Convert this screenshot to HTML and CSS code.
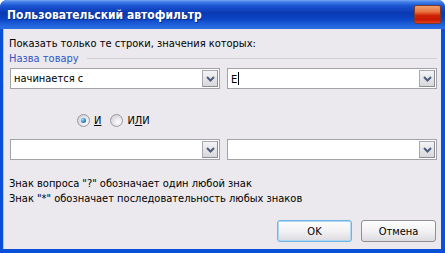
FILE: index.html
```html
<!DOCTYPE html>
<html lang="ru">
  <head>
    <meta charset="UTF-8" />
    <title>Пользовательский автофильтр</title>
    <link rel="stylesheet" href="styles.css">
  </head>
  <body>
    <div class="window">
      <div class="titlebar">
        <span class="title">Пользовательский автофильтр</span>
        <span class="close-btn"></span>
      </div>

      <div class="client">
        <p class="lead">Показать только те строки, значения которых:</p>

        <div class="group">
          <span class="group-name">Назва товару</span>
          <span class="group-line"></span>
        </div>

        <div class="combo-row first">
          <div class="combo">
            <span class="combo-text">начинается с</span>
            <span class="combo-btn">
              <svg width="9" height="6" viewBox="0 0 9 6"><polyline points="1,1 4.5,4.5 8,1" fill="none" stroke="#4d5d7e" stroke-width="2"/></svg>
            </span>
          </div>
          <div class="combo">
            <span class="combo-text">E<span class="caret"></span></span>
            <span class="combo-btn">
              <svg width="9" height="6" viewBox="0 0 9 6"><polyline points="1,1 4.5,4.5 8,1" fill="none" stroke="#4d5d7e" stroke-width="2"/></svg>
            </span>
          </div>
        </div>

        <div class="radios">
          <label class="radio"><span class="dot checked"></span><span><u>И</u></span></label>
          <label class="radio"><span class="dot"></span><span>И<u>Л</u>И</span></label>
        </div>

        <div class="combo-row second">
          <div class="combo">
            <span class="combo-text"></span>
            <span class="combo-btn">
              <svg width="9" height="6" viewBox="0 0 9 6"><polyline points="1,1 4.5,4.5 8,1" fill="none" stroke="#4d5d7e" stroke-width="2"/></svg>
            </span>
          </div>
          <div class="combo">
            <span class="combo-text"></span>
            <span class="combo-btn">
              <svg width="9" height="6" viewBox="0 0 9 6"><polyline points="1,1 4.5,4.5 8,1" fill="none" stroke="#4d5d7e" stroke-width="2"/></svg>
            </span>
          </div>
        </div>

        <div class="notes">
          <p>Знак вопроса "?" обозначает один любой знак</p>
          <p>Знак "*" обозначает последовательность любых знаков</p>
        </div>

        <div class="buttons">
          <button class="default">OK</button>
          <button>Отмена</button>
        </div>
      </div>
    </div>
  </body>
</html>
```

FILE: styles.css
```css
body {
  margin: 0;
  font-family: "DejaVu Sans Condensed", "DejaVu Sans", sans-serif;
  font-size: 11px;
  color: #000;
  background: #ffffff;
}
.window {
  width: 445px;
  height: 253px;
  box-sizing: border-box;
  display: flex;
  flex-direction: column;
  background: #0a4fd8;
  border-radius: 7px 7px 0 0;
  overflow: hidden;
}
.titlebar {
  height: 29px;
  flex: none;
  display: flex;
  align-items: center;
  justify-content: space-between;
  padding: 0 4px 0 7px;
  background: linear-gradient(to bottom, #7aa6f2 0, #3f7ee8 2px, #1a52d0 6px, #0a3ab2 13px, #0c44c4 19px, #2163dc 25px, #2e6fe2 29px);
}
.title {
  color: #fff;
  font-weight: bold;
  font-size: 12px;
  text-shadow: 1px 1px 0 #0a2a80;
  margin-top: 1px;
}
.close-btn {
  width: 27px;
  height: 19px;
  box-sizing: border-box;
  border: 1px solid #7a3a2a;
  border-radius: 2px;
  background: linear-gradient(to bottom, #f0a070 0, #e8703e 35%, #d02408 55%, #c81800 80%, #e04020 100%);
  margin-top: -1px;
}
.client {
  flex: 1;
  margin: 0 4px 4px 3px;
  background: #ebe9ed;
  border-left: 1px solid #a9c8f8;
  padding: 8px 4px 0 5px;
  display: flex;
  flex-direction: column;
}
.lead {
  margin: 0;
  line-height: 13px;
}
.group {
  display: flex;
  align-items: center;
  margin-top: 2px;
  height: 13px;
}
.group-name {
  color: #2f56c2;
}
.group-line {
  flex: 1;
  height: 1px;
  background: #d2d0d6;
  margin-left: 8px;
}
.combo-row {
  display: flex;
  justify-content: space-between;
  padding-left: 1px;
}
.combo-row.first {
  margin-top: 3px;
}
.combo-row.second {
  margin-top: 12px;
}
.combo {
  width: 210px;
  height: 21px;
  box-sizing: border-box;
  border: 1px solid #a3a2a7;
  background: #fff;
  display: flex;
  align-items: center;
  padding: 1px;
}
.combo-text {
  flex: 1;
  padding-left: 2px;
  white-space: nowrap;
}
.caret {
  display: inline-block;
  width: 1px;
  height: 13px;
  background: #000;
  vertical-align: -2px;
  margin-left: 1px;
}
.combo-btn {
  width: 16px;
  height: 17px;
  box-sizing: border-box;
  border: 1px solid #a8a8b0;
  border-right-color: #8c8c94;
  border-bottom-color: #8c8c94;
  background: linear-gradient(to bottom, #f4f4f6, #d8d8dc);
  display: flex;
  align-items: center;
  justify-content: center;
}
.radios {
  display: flex;
  gap: 9px;
  padding-left: 68px;
  margin-top: 25px;
  height: 13px;
  align-items: center;
}
.radio {
  display: flex;
  align-items: center;
  gap: 4px;
}
.radio u {
  text-decoration-thickness: 1px;
}
.dot {
  width: 13px;
  height: 13px;
  box-sizing: border-box;
  border-radius: 50%;
  border: 1px solid #9a9aa0;
  background: radial-gradient(circle at 65% 65%, #ffffff 0, #e8e8ec 40%, #c8c8cc 100%);
  position: relative;
}
.dot.checked::after {
  content: "";
  position: absolute;
  left: 3px;
  top: 3px;
  width: 5px;
  height: 5px;
  border-radius: 50%;
  background: radial-gradient(circle at 35% 35%, #a8e0ff 0, #2a8ad0 50%, #0e4e90 100%);
}
.notes {
  margin-top: 16px;
}
.notes p {
  margin: 0;
  line-height: 15px;
}
.buttons {
  display: flex;
  justify-content: flex-end;
  gap: 9px;
  margin-top: 14px;
  padding-right: 1px;
}
button {
  width: 75px;
  height: 22px;
  font-family: inherit;
  font-size: 11px;
  border: 1px solid #8e8e94;
  border-radius: 3px;
  background: linear-gradient(to bottom, #fdfdfd 0, #f2f2f4 50%, #dcdce0 100%);
  padding: 0;
}
button.default {
  border-color: #6fb4e2;
  box-shadow: inset 0 0 0 1px #aed8f4;
}
```
